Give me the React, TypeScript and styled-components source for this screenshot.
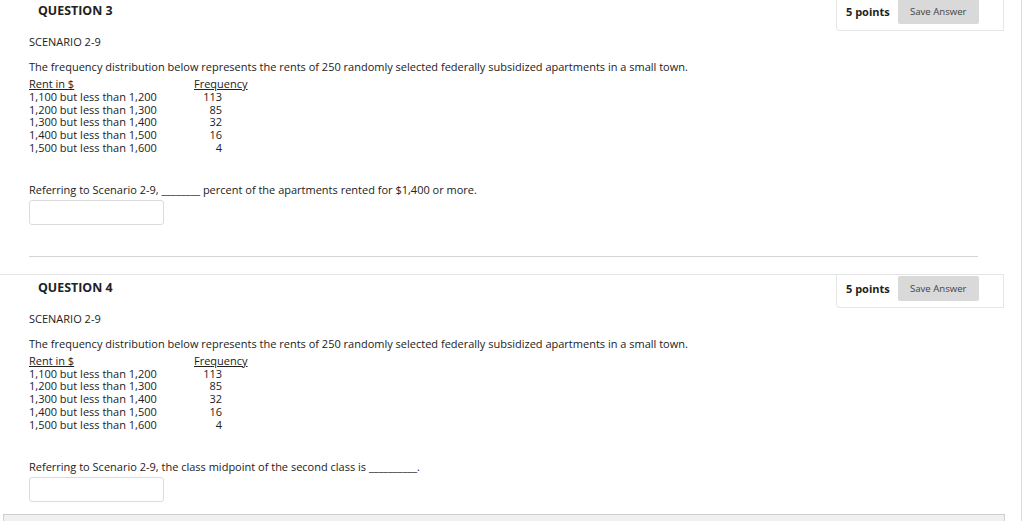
import React from "react";
import styled, { createGlobalStyle } from "styled-components";

const Global = createGlobalStyle`
  html, body { margin: 0; padding: 0; background: #fff; }
  body { font-family: "Open Sans", "DejaVu Sans", sans-serif; color: #222; overflow: hidden; }
`;

const Page = styled.div`
  position: relative;
  width: 1024px;
  height: 521px;
  overflow: hidden;
`;

const Column = styled.div`
  width: 1004px;
  margin-top: -3px;
`;

const EdgeLine = styled.div`
  position: absolute;
  top: 0;
  left: 1021px;
  width: 1px;
  height: 100%;
  background: #dcdcdc;
`;

const Block = styled.section`
  border-top: 1px solid #e4e4e4;
  width: 1004px;
`;

const Header = styled.div`
  display: flex;
  justify-content: space-between;
  align-items: flex-start;
  height: 33px;
`;

const Title = styled.h3`
  margin: 0;
  padding: 5px 0 0 38px;
  font-size: 12.4px;
  line-height: 16px;
  font-weight: 700;
  color: #222;
`;

const PointsBox = styled.div`
  width: 168px;
  height: 33px;
  border: 1px solid #e6e6e6;
  border-top: none;
  border-bottom-left-radius: 4px;
  display: flex;
  align-items: flex-start;
  padding: 1px 0 0 9px;
  box-sizing: border-box;
  gap: 8px;
`;

const Points = styled.span`
  font-size: 11px;
  font-weight: 700;
  line-height: 25px;
`;

const SaveButton = styled.button`
  width: 81px;
  height: 25px;
  border: none;
  border-radius: 2px;
  background: #d9d9d9;
  color: #444;
  font-family: "Open Sans", sans-serif;
  font-size: 9.6px;
  padding: 0;
`;

const Content = styled.div`
  padding: 3px 0 0 29px;
`;

const Line = styled.p<{ $mt?: number }>`
  margin: ${(p) => p.$mt ?? 0}px 0 0;
  font-size: 11px;
  line-height: 16px;
`;

const Table = styled.div`
  margin-top: 3px;
  display: grid;
  grid-template-columns: 165px auto;
  font-size: 11px;
  line-height: 12.8px;
`;

const HeadCell = styled.span`
  text-decoration: underline;
`;

const Num = styled.span`
  display: block;
  width: 28px;
  text-align: right;
`;

const AnswerInput = styled.input`
  display: block;
  margin-top: 2px;
  width: 135px;
  height: 25px;
  box-sizing: border-box;
  border: 1px solid #dcdcdc;
  border-radius: 3px;
  background: #fff;
`;

const Separator = styled.hr`
  margin: 31px 0 0 29px;
  width: 949px;
  border: none;
  border-top: 1px solid #d4d4d4;
  height: 0;
`;

const Spacer = styled.div<{ $h: number }>`
  height: ${(p) => p.$h}px;
`;

const Footer = styled.div`
  margin: 12px 0 0 3px;
  width: 1002px;
  height: 30px;
  border: 1px solid #d0d0d0;
  background: #f0f0f0;
  box-sizing: border-box;
`;

const rows: [string, number][] = [
  ["1,100 but less than 1,200", 113],
  ["1,200 but less than 1,300", 85],
  ["1,300 but less than 1,400", 32],
  ["1,400 but less than 1,500", 16],
  ["1,500 but less than 1,600", 4],
];

function Question({ n, prompt, last }: { n: number; prompt: React.ReactNode; last?: boolean }) {
  return (
    <Block>
      <Header>
        <Title>QUESTION {n}</Title>
        <PointsBox>
          <Points>5 points</Points>
          <SaveButton>Save Answer</SaveButton>
        </PointsBox>
      </Header>
      <Content>
        <Line>SCENARIO 2-9</Line>
        <Line $mt={9}>
          The frequency distribution below represents the rents of 250 randomly selected federally subsidized apartments in a small town.
        </Line>
        <Table>
          <HeadCell>Rent in $</HeadCell>
          <HeadCell>Frequency</HeadCell>
          {rows.map(([r, f]) => (
            <React.Fragment key={r}>
              <span>{r}</span>
              <Num>{f}</Num>
            </React.Fragment>
          ))}
        </Table>
        <Line $mt={27}>{prompt}</Line>
        <AnswerInput type="text" />
      </Content>
      {!last && <Separator />}
      {!last && <Spacer $h={17} />}
    </Block>
  );
}

export default function App() {
  return (
    <Page>
      <Global />
      <Column>
        <Question n={3} prompt={<>Referring to Scenario 2-9, ________ percent of the apartments rented for $1,400 or more.</>} />
        <Question n={4} last prompt={<>Referring to Scenario 2-9, the class midpoint of the second class is __________.</>} />
        <Footer />
      </Column>
      <EdgeLine />
    </Page>
  );
}
